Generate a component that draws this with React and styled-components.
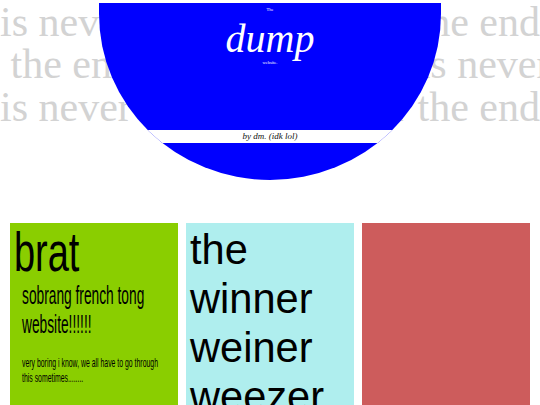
import React from 'react'
import styled, { createGlobalStyle } from 'styled-components'

const GlobalStyle = createGlobalStyle`
  body {
    margin: 0;
    background: #fff;
    font-family: "Liberation Serif", "Times New Roman", serif;
  }
`

export default function App() {
  return (
    <>
      <GlobalStyle />
      <Hero>
        <Backdrop>
          <EchoLine>is never the end is never the end</EchoLine>
          <EchoLine> the end is never the end is never the end</EchoLine>
          <EchoLine>is never the end is never the end</EchoLine>
        </Backdrop>
        <Dome>
          <Tag $top={3.7}>The</Tag>
          <Title>dump</Title>
          <Tag $top={1.5}>website.</Tag>
          <Credit>by dm. (idk lol)</Credit>
        </Dome>
      </Hero>
      <Cards>
        <Card $bg="#8ace00">
          <BratTitle>brat</BratTitle>
          <BratBody>
            <Squish $size={25} $scale={0.55} $gap={0}>
              sobrang french tong website!!!!!!
            </Squish>
            <Squish $size={13} $scale={0.53} $gap={15.7}>
              very boring i know, we all have to go through this sometimes........
            </Squish>
          </BratBody>
        </Card>
        <Card $bg="#afeeee">
          <Stack>the winner weiner weezer</Stack>
        </Card>
        <Card $bg="#cd5c5c" />
      </Cards>
    </>
  )
}

const Hero = styled.header`
  position: relative;
  height: 222.7px;
  overflow: hidden;
`

const Backdrop = styled.div`
  padding-top: 0.5px;
  color: #d3d3d3;
  font-size: 42px;
  line-height: 42.5px;
`

const EchoLine = styled.div`
  white-space: pre;
  overflow: hidden;
`

const Dome = styled.div`
  position: absolute;
  top: 3.3px;
  left: 50%;
  transform: translateX(-50%);
  width: 342px;
  height: 177px;
  background: #0000ff;
  border-radius: 0 0 171px 171px / 0 0 166px 166px;
  overflow: hidden;
  display: flex;
  flex-direction: column;
  align-items: center;
  color: #fff;
`

const Tag = styled.div`
  margin-top: ${(p) => p.$top}px;
  font-size: 4.5px;
  line-height: 6px;
`

const Title = styled.h1`
  margin: 6px 0 0;
  font-size: 40px;
  line-height: 40px;
  font-style: italic;
  font-weight: normal;
`

const Credit = styled.div`
  align-self: stretch;
  margin-top: 63.5px;
  height: 13.3px;
  background: #fff;
  color: #111;
  text-align: center;
  font-size: 9px;
  line-height: 13.3px;
  font-style: italic;
`

const Cards = styled.main`
  display: grid;
  grid-template-columns: repeat(3, minmax(0, 1fr));
  gap: 8px;
  padding: 0 10px;
`

const Card = styled.section`
  min-height: 300px;
  padding: 2.5px 4px;
  overflow: hidden;
  background: ${(p) => p.$bg};
  color: #000;
  font-family: "Liberation Sans", Arial, sans-serif;
`

const BratTitle = styled.h2`
  margin: 0;
  font-size: 55px;
  line-height: 55px;
  font-weight: normal;
  white-space: nowrap;
  transform: scaleX(0.69);
  transform-origin: left top;
`

const BratBody = styled.div`
  margin: 0.8px 0 0 7.5px;
`

const Squish = styled.p`
  margin: ${(p) => p.$gap}px 0 0;
  width: 268px;
  font-size: ${(p) => p.$size}px;
  transform: scaleX(${(p) => p.$scale});
  transform-origin: left top;
`

const Stack = styled.p`
  margin: 0;
  font-size: 41.6px;
  line-height: 49px;
`
